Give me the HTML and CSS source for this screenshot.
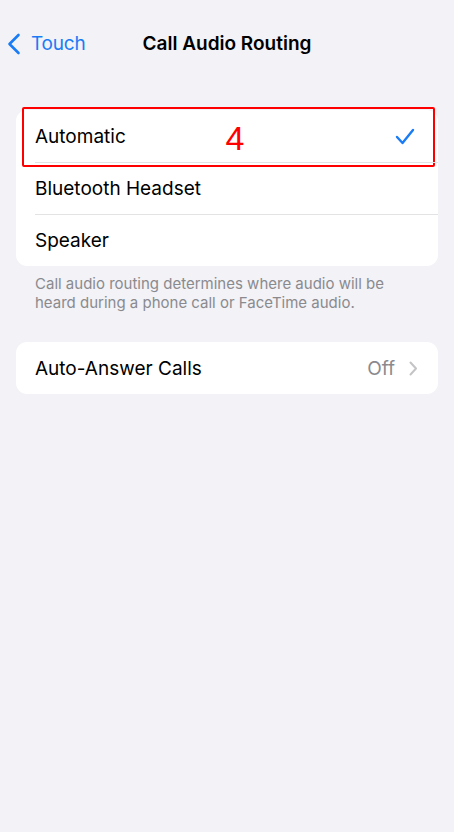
FILE: index.html
```html
<!DOCTYPE html>
<html>
<head>
<meta charset="utf-8">
<link rel="stylesheet" href="styles.css">
</head>
<body>
<div class="screen">
  <div class="nav">
    <div class="back">
      <svg class="chev" width="14" height="22" viewBox="0 0 14 22"><path d="M11.5 2 L2.5 11 L11.5 20" fill="none" stroke="#1a7cf5" stroke-width="2.6" stroke-linecap="round" stroke-linejoin="round"/></svg>
      <span class="back-label">Touch</span>
    </div>
    <div class="title">Call Audio Routing</div>
  </div>

  <div class="group">
    <div class="row selected">
      <span class="label">Automatic</span>
      <svg class="check" width="20" height="17" viewBox="0 0 20 17"><path d="M2 9 L7.5 15 L18 2" fill="none" stroke="#1a7cf5" stroke-width="2.4" stroke-linecap="round" stroke-linejoin="round"/></svg>
      <div class="mark"><span class="num">4</span></div>
    </div>
    <div class="row"><span class="label">Bluetooth Headset</span></div>
    <div class="row"><span class="label">Speaker</span></div>
  </div>
  <p class="footer">Call audio routing determines where audio will be heard during a phone call or FaceTime audio.</p>

  <div class="group">
    <div class="row">
      <span class="label">Auto-Answer Calls</span>
      <span class="value">Off</span>
      <svg class="disc" width="9" height="15" viewBox="0 0 9 15"><path d="M1.5 1.5 L7 7.5 L1.5 13.5" fill="none" stroke="#c4c4c7" stroke-width="2" stroke-linecap="round" stroke-linejoin="round"/></svg>
    </div>
  </div>
</div>
</body>
</html>
```
FILE: styles.css
```css
* { box-sizing: border-box; }
html, body { margin: 0; padding: 0; }
body {
  background: #f2f2f7;
  font-family: Inter, "Liberation Sans", Arial, sans-serif;
  color: #000;
  width: 454px;
  height: 832px;
  overflow: hidden;
}
.screen { padding: 0 16px; }
.nav {
  height: 88px;
  padding-top: 20px;
  display: flex;
  align-items: center;
  justify-content: center;
  position: relative;
  margin: 0 -16px;
}
.back {
  position: absolute;
  left: 7px;
  top: 32px;
  display: flex;
  align-items: center;
  gap: 10px;
  color: #1a7cf5;
}
.back-label { font-size: 19px; letter-spacing: -0.2px; }
.title {
  font-size: 19px;
  font-weight: 600;
  margin-top: -22px;
}
.group {
  background: #fff;
  border-radius: 11px;
  margin-top: 22px;
}
.row {
  height: 52px;
  display: flex;
  align-items: center;
  padding: 0 19px;
  position: relative;
}
.row + .row::before {
  content: "";
  position: absolute;
  top: 0;
  left: 19px;
  right: 0;
  height: 1px;
  background: #e3e3e6;
}
.label { font-size: 19px; flex: 1; }
.check { margin-right: 4px; }
.mark {
  position: absolute;
  left: 6px;
  right: 3px;
  top: -3px;
  bottom: -5px;
  border: 2.5px solid #f00;
  border-radius: 2px;
  display: flex;
  justify-content: center;
  align-items: center;
}
.num {
  font-family: "Liberation Sans", Arial, sans-serif;
  color: #f00;
  font-size: 34px;
  line-height: 1;
  margin-left: 13px;
  margin-top: 2px;
}
.footer {
  margin: 8px 0 0;
  padding: 0 19px;
  font-size: 15px;
  line-height: 19px;
  color: #8a8a8e;
}
.footer + .group { margin-top: 30px; }
.value { font-size: 19px; color: #8a8a8e; margin-right: 14px; }
.disc { margin-right: 1px; }
```
